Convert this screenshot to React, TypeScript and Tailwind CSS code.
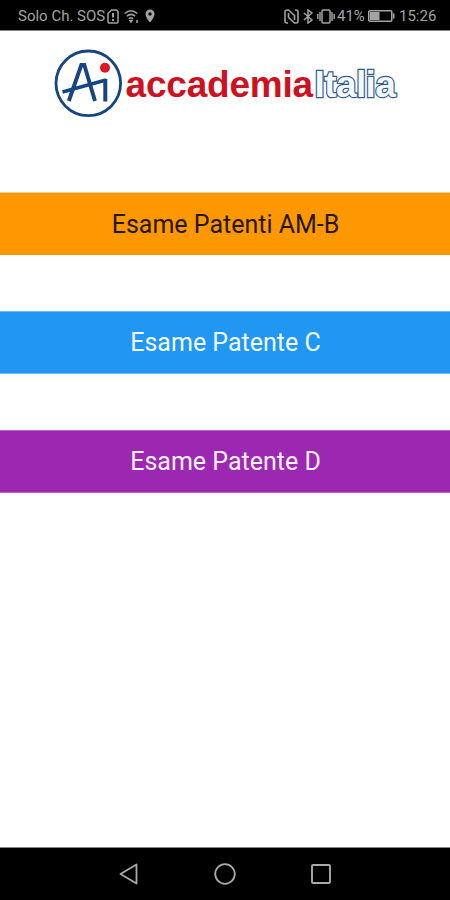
const exams = [
    { label: "Esame Patenti AM-B", className: "border-t border-[#f3cf98] bg-[#ff9800] pt-px text-[#241800]" },
    { label: "Esame Patente C", className: "border-y border-[#6fbdf6] bg-[#2196f3] pt-px text-[#f0faff]" },
    { label: "Esame Patente D", className: "border-y border-[#b469c2] bg-[#9c27b0] text-[#fdf0ff]" },
];

function StatusBar() {
    return (
        <header className="flex h-[31px] items-center justify-between border-b border-[#858585] bg-black pt-[2px] pl-[18px] pr-[14px] text-[15px] text-[#a3a3a3]">
            <div className="flex items-center">
                <span className="w-[88px] whitespace-nowrap">Solo Ch. SOS</span>
                {/* SIM */}
                <svg className="ml-px" width="12" height="15" viewBox="0 0 12 15" fill="none" stroke="currentColor" strokeWidth="1.5">
                    <path d="M4.5 1h5L11 2.5V13a1 1 0 0 1-1 1H2a1 1 0 0 1-1-1V4.5Z" />
                    <path d="M6 4v4.500M6 10v2" strokeWidth="2" />
                </svg>
                {/* Wi-Fi */}
                <svg className="ml-[5px]" width="16" height="14" viewBox="0 0 16 14" fill="none" stroke="currentColor" strokeWidth="1.5">
                    <path d="M.7 4.5q6.300-5.500 12.600 0M2.800 7.200q4.200-3.600 8.400 0M4.900 9.700q2.100-1.800 4.200 0" />
                    <path d="m6 11.500 1 1.500 1-1.500ZM13 11v3" />
                </svg>
                {/* Location */}
                <svg className="ml-[5px]" width="10" height="14" viewBox="0 0 10 14" fill="currentColor">
                    <path fillRule="evenodd" d="M5 .5A4.500 4.500 0 0 0 .5 5C.5 8.400 5 13.500 5 13.500S9.500 8.400 9.500 5A4.500 4.500 0 0 0 5 .5Zm0 2.800a1.700 1.700 0 1 1 0 3.400 1.700 1.700 0 0 1 0-3.400Z" />
                </svg>
            </div>
            <div className="flex items-center">
                {/* NFC */}
                <svg width="15" height="15" viewBox="0 0 15 15" fill="none" stroke="currentColor" strokeWidth="1.6">
                    <path d="M4 14H3q-2 0-2-2V3q0-2 2-2h1.500l6 5.500V11M11 1h1q2 0 2 2v9q0 2-2 2h-1.500l-6-5.500V4" />
                </svg>
                {/* Bluetooth */}
                <svg className="ml-[4px]" width="10" height="15" viewBox="0 0 10 15" fill="none" stroke="currentColor" strokeWidth="1.5">
                    <path d="m1 4 8 7-4 3V1l4 3-8 7" />
                </svg>
                {/* Vibration */}
                <svg className="ml-[4px]" width="18" height="15" viewBox="0 0 18 15" fill="none" stroke="currentColor" strokeWidth="1.5">
                    <rect x="5" y="1" width="8" height="13" rx="1" />
                    <path d="M3 3v9M.8 5v5M15 3v9M17.200 5v5" />
                </svg>
                <span className="ml-[2px] w-[29px] whitespace-nowrap">41%</span>
                {/* Battery */}
                <svg className="ml-[2px]" width="27" height="12" viewBox="0 0 27 12">
                    <rect x=".8" y=".8" width="23" height="10.4" rx="1" fill="none" stroke="currentColor" strokeWidth="1.6" />
                    <path d="M2 2h9.500v8H2ZM25 3.500h1.500v5H25Z" fill="currentColor" />
                </svg>
                <span className="ml-[4px] w-[37px] whitespace-nowrap">15:26</span>
            </div>
        </header>
    );
}

function Logo() {
    return (
        <div className="flex h-[161px] items-start pt-[18px] pl-[54px]">
            <svg width="69" height="69" viewBox="0 0 69 69" fill="none" stroke="#174580">
                <circle cx="34.3" cy="34.3" r="32.3" strokeWidth="2.8" />
                <path d="M14.800 52 27.300 16h3L41 52" strokeWidth="3.9" />
                <path d="M8.500 43 52 31" strokeWidth="3.5" />
                <path d="M51.300 30v22.500" strokeWidth="4" />
                <circle cx="51" cy="18.7" r="5" fill="#dc1820" stroke="none" />
            </svg>
            <div className="mt-[15px] ml-[2.5px] flex font-['Liberation_Sans',Arial,sans-serif] text-[37px] leading-[42px] font-bold">
                <span className="w-[189px] tracking-[-0.2px] text-[#cf1020]">accademia</span>
                <span className="tracking-[-0.6px] text-[#f4f9fe] [paint-order:stroke_fill] [-webkit-text-stroke:2.4px_#31598c]">Italia</span>
            </div>
        </div>
    );
}

function NavigationBar() {
    return (
        <nav className="flex h-[53px] items-center justify-center gap-[75px] border-t border-[#858585] bg-black text-[#a9a9a9]">
            <svg width="20" height="22" viewBox="0 0 20 22" fill="none" stroke="currentColor" strokeWidth="1.8">
                <path d="M1.500 11 17.500 1.500v19Z" strokeLinejoin="round" />
            </svg>
            <svg width="22" height="22" viewBox="0 0 22 22" fill="none" stroke="currentColor" strokeWidth="1.8">
                <circle cx="11" cy="11" r="9.8" />
            </svg>
            <svg width="20" height="20" viewBox="0 0 20 20" fill="none" stroke="currentColor" strokeWidth="1.9">
                <rect x="1" y="1" width="18" height="18" rx="1" />
            </svg>
        </nav>
    );
}

export default function App() {
    return (
        <div className="flex h-[900px] w-[450px] flex-col overflow-hidden bg-white font-[Roboto,sans-serif]">
            <StatusBar />
            <main className="flex-1">
                <Logo />
                <div className="flex flex-col gap-[56px]">
                    {exams.map((exam) => (
                        <button key={exam.label} className={`h-[63px] w-full pl-px text-[25px] ${exam.className}`}>
                            {exam.label}
                        </button>
                    ))}
                </div>
            </main>
            <NavigationBar />
        </div>
    );
}
